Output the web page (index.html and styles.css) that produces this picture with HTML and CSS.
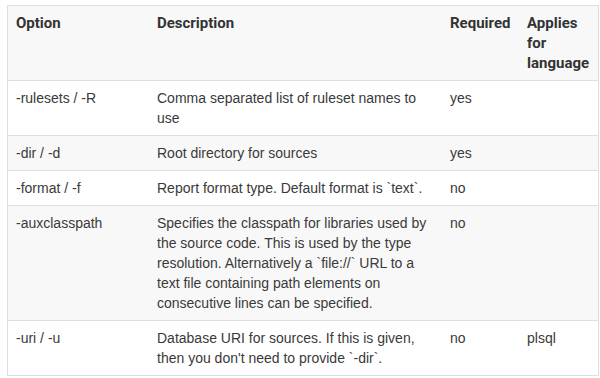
FILE: index.html
```html
<!DOCTYPE html>
<html lang="en">
<head>
  <meta charset="UTF-8" />
  <title>CLI options</title>
  <link rel="stylesheet" href="styles.css">
</head>
<body>
  <table class="options">
    <thead>
      <tr>
        <th class="col-opt">Option</th>
        <th class="col-desc">Description</th>
        <th class="col-req">Required</th>
        <th class="col-lang">Applies for language</th>
      </tr>
    </thead>
    <tbody>
      <tr>
        <td>-rulesets / -R</td>
        <td>Comma separated list of ruleset names to use</td>
        <td>yes</td>
        <td></td>
      </tr>
      <tr class="alt">
        <td>-dir / -d</td>
        <td>Root directory for sources</td>
        <td>yes</td>
        <td></td>
      </tr>
      <tr>
        <td>-format / -f</td>
        <td>Report format type. Default format is `text`.</td>
        <td>no</td>
        <td></td>
      </tr>
      <tr class="alt">
        <td>-auxclasspath</td>
        <td>Specifies the classpath for libraries used by the source code. This is used by the type resolution. Alternatively a `file://` URL to a text file containing path elements on consecutive lines can be specified.</td>
        <td>no</td>
        <td></td>
      </tr>
      <tr>
        <td>-uri / -u</td>
        <td>Database URI for sources. If this is given, then you don't need to provide `-dir`.</td>
        <td>no</td>
        <td>plsql</td>
      </tr>
    </tbody>
  </table>
</body>
</html>
```

FILE: styles.css
```css
body {
  margin: 0;
  padding: 5px 3px 0 7px;
  background: #fff;
  font-family: "Liberation Sans", Arial, sans-serif;
  font-size: 14px;
  color: #3a3a3a;
}

.options {
  width: 590px;
  border-collapse: collapse;
  border: 1px solid #dfdfdf;
  table-layout: fixed;
}

.options th,
.options td {
  padding: 7px 8px;
  text-align: left;
  vertical-align: top;
  line-height: 20px;
  border-top: 1px solid #dfdfdf;
}

.options th {
  font-family: Roboto, "Noto Sans", sans-serif;
  font-size: 15px;
  font-weight: bold;
  color: #333;
  background: #f8f8f8;
}

.options tr.alt td {
  background: #f8f8f8;
}

.col-opt { width: 125px; }
.col-desc { width: 277px; }
.col-req { width: 61px; }
.col-lang { width: 63px; }
```
